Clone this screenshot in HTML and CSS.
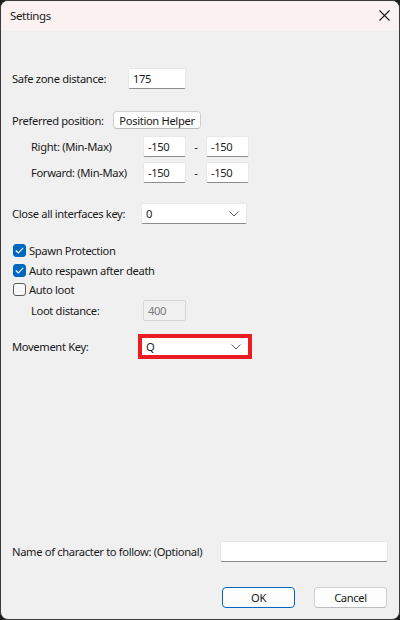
FILE: index.html
```html
<!DOCTYPE html>
<html lang="en">
<head>
  <meta charset="UTF-8" />
  <title>Settings</title>
  <link rel="stylesheet" href="styles.css">
</head>
<body>
  <div class="window">
    <div class="titlebar">
      <span class="title">Settings</span>
      <svg class="close" width="11" height="11" viewBox="0 0 11 11">
        <path d="M0.5 0.5 L10.5 10.5 M10.5 0.5 L0.5 10.5" stroke="#1a1a1a" stroke-width="1.1" fill="none" />
      </svg>
    </div>

    <div class="content">
      <div class="row safe">
        <label class="lbl w-safe">Safe zone distance:</label>
        <div class="field w-num">175</div>
      </div>

      <div class="row pref">
        <label class="lbl w-pref">Preferred position:</label>
        <button type="button" class="btn helper">Position Helper</button>
      </div>

      <div class="row range r-right">
        <label class="lbl sub">Right: (Min-Max)</label>
        <div class="field w-small">-150</div>
        <span class="dash">-</span>
        <div class="field w-small">-150</div>
      </div>

      <div class="row range r-fwd">
        <label class="lbl sub">Forward: (Min-Max)</label>
        <div class="field w-small">-150</div>
        <span class="dash">-</span>
        <div class="field w-small">-150</div>
      </div>

      <div class="row close-key">
        <label class="lbl w-close">Close all interfaces key:</label>
        <div class="field select w-select">
          <span>0</span>
          <svg class="chev" width="10" height="6" viewBox="0 0 10 6"><path d="M0.5 0.5 L5 5 L9.5 0.5" stroke="#5f5f5f" fill="none" /></svg>
        </div>
      </div>

      <div class="check c1">
        <span class="box on"><svg width="9" height="7" viewBox="0 0 9 7"><path d="M0.8 3.5 L3.3 6 L8.2 0.8" stroke="#fff" stroke-width="1.2" fill="none" /></svg></span>
        <span>Spawn Protection</span>
      </div>
      <div class="check c2">
        <span class="box on"><svg width="9" height="7" viewBox="0 0 9 7"><path d="M0.8 3.5 L3.3 6 L8.2 0.8" stroke="#fff" stroke-width="1.2" fill="none" /></svg></span>
        <span>Auto respawn after death</span>
      </div>
      <div class="check c3">
        <span class="box"></span>
        <span>Auto loot</span>
      </div>

      <div class="row loot">
        <label class="lbl sub">Loot distance:</label>
        <div class="field disabled w-small">400</div>
      </div>

      <div class="row move">
        <label class="lbl w-move">Movement Key:</label>
        <div class="highlight">
          <div class="field select w-select">
            <span>Q</span>
            <svg class="chev" width="10" height="6" viewBox="0 0 10 6"><path d="M0.5 0.5 L5 5 L9.5 0.5" stroke="#5f5f5f" fill="none" /></svg>
          </div>
        </div>
      </div>

      <div class="row follow">
        <label class="lbl w-follow">Name of character to follow: (Optional)</label>
        <div class="field w-follow-in"></div>
      </div>

      <div class="actions">
        <button type="button" class="btn ok">OK</button>
        <button type="button" class="btn">Cancel</button>
      </div>
    </div>
  </div>
</body>
</html>
```

FILE: styles.css
```css
html, body { margin: 0; padding: 0; }
body {
  background: #1e1e1e;
  font-family: "Noto Sans", "Open Sans", sans-serif;
  font-size: 11.2px;
  letter-spacing: -0.35px;
  color: #1a1a1a;
  width: 400px;
  height: 620px;
  overflow: hidden;
}

.window {
  width: 400px;
  height: 620px;
  box-sizing: border-box;
  border: 1px solid #3a3a3a;
  border-radius: 8px;
  background: #f0f0f0;
  overflow: hidden;
}

.titlebar {
  height: 30px;
  background: #f9f2f0;
  display: flex;
  align-items: center;
  justify-content: space-between;
  padding: 0 9px 0 9px;
}
.title { font-size: 11.5px; color: #1a1a1a; margin-top: -1px; }
.close { margin-top: -1px; }

.content { padding-left: 11px; }

.row { display: flex; align-items: center; }
.lbl { flex: none; white-space: nowrap; }
.sub { margin-left: 19px; width: 112px; }
.w-safe { width: 116px; }
.w-pref { width: 101px; }
.w-close { width: 129px; }
.w-move { width: 126px; }
.w-follow { width: 208px; }

.field {
  box-sizing: border-box;
  height: 21px;
  background: #fff;
  border: 1px solid #e8e8e8;
  border-bottom-color: #8c8c8c;
  border-radius: 2px;
  padding-left: 4px;
  display: flex;
  align-items: center;
  flex: none;
}
.w-num { width: 58px; }
.w-small { width: 43px; }
.w-select { width: 106px; }
.w-follow-in { width: 168px; }

.field.disabled {
  background: #f0f0f0;
  border: 1px solid #d6d6d6;
  color: #7a7a7a;
}

.select { justify-content: space-between; padding-right: 7px; }
.chev { margin-top: 1px; }

.dash { width: 20px; text-align: center; flex: none; }

.btn {
  font-family: inherit;
  font-size: 11.2px;
  letter-spacing: -0.35px;
  color: #1a1a1a;
  background: #fdfdfd;
  border: 1px solid #d0d0d0;
  border-bottom-color: #bcbcbc;
  border-radius: 4px;
  padding: 0;
  box-sizing: border-box;
  white-space: nowrap;
}
.helper { width: 88px; height: 18px; flex: none; }

.safe { margin-top: 37px; }
.pref { margin-top: 22px; height: 18px; }
.r-right { margin-top: 7px; }
.r-fwd { margin-top: 5px; }
.close-key { margin-top: 20px; }

.check { display: flex; align-items: center; height: 13px; gap: 3px; margin-left: 1px; }
.c1 { margin-top: 20px; }
.c2 { margin-top: 7px; }
.c3 { margin-top: 6px; }
.box {
  box-sizing: border-box;
  width: 13px;
  height: 13px;
  border-radius: 3px;
  border: 1px solid #5c5c5c;
  background: #f7f7f7;
  display: flex;
  align-items: center;
  justify-content: center;
}
.box.on { background: #0067c0; border-color: #0067c0; }

.loot { margin-top: 4px; }

.move { margin-top: 13px; }
.highlight {
  border: 4px solid #ed1c24;
  background: #ed1c24;
}
.highlight .field { height: 17px; border: none; border-radius: 0; }

.follow { margin-top: 182px; }

.actions {
  margin-top: 25px;
  display: flex;
  justify-content: flex-end;
  gap: 19px;
  padding-right: 12px;
}
.actions .btn { width: 73px; height: 21px; }
.actions .ok { border-color: #0067c0; }
```
